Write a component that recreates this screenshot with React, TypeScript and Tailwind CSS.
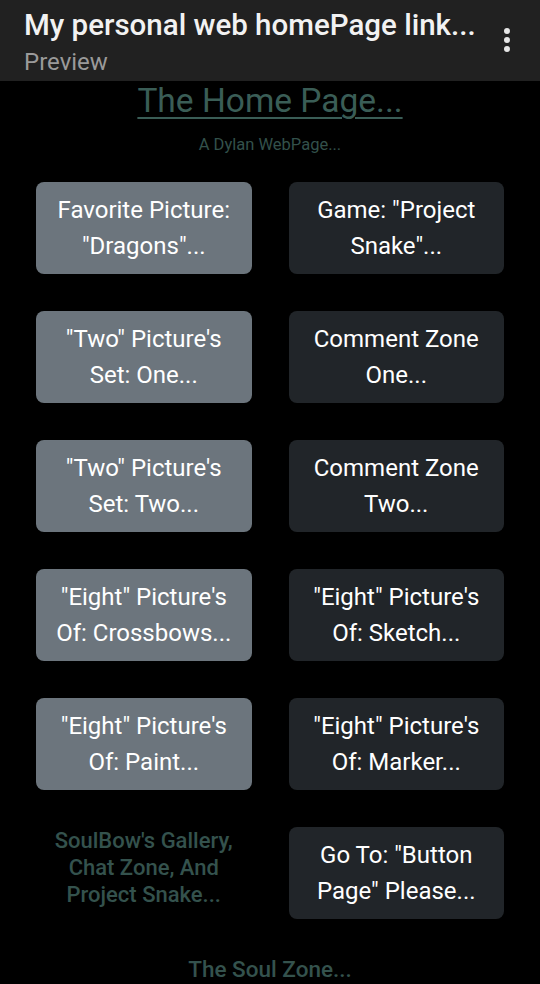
import React from 'react';

const buttons = [
  ['Favorite Picture: "Dragons"...', 'Game: "Project Snake"...'],
  ['"Two" Picture\'s Set: One...', 'Comment Zone One...'],
  ['"Two" Picture\'s Set: Two...', 'Comment Zone Two...'],
  ['"Eight" Picture\'s Of: Crossbows...', '"Eight" Picture\'s Of: Sketch...'],
  ['"Eight" Picture\'s Of: Paint...', '"Eight" Picture\'s Of: Marker...'],
];

function PageButton({ label, light }: { label: string; light?: boolean }) {
  return (
    <button
      className={
        'h-[92px] rounded-[8px] px-4 text-[24px] leading-[36px] text-white ' +
        (light ? 'bg-[#6c757d]' : 'bg-[#212529]')
      }
    >
      {label}
    </button>
  );
}

export default function App() {
  return (
    <div className="min-h-[984px] w-[540px] bg-black font-['Roboto',sans-serif]">
      <div className="flex h-[81px] items-start justify-between bg-[#212121] pl-6 pr-[30px]">
        <div className="pt-[7px]">
          <div className="text-[29.5px] font-medium leading-[36px] text-[#f2f2f2]">My personal web homePage link...</div>
          <div className="mt-[2px] text-[24px] leading-[34px] text-[#9a9a9a]">Preview</div>
        </div>
        <div className="mt-[28px] flex flex-col gap-[3px]">
          <span className="h-[6px] w-[6px] rounded-full bg-[#e6e6e6]" />
          <span className="h-[6px] w-[6px] rounded-full bg-[#e6e6e6]" />
          <span className="h-[6px] w-[6px] rounded-full bg-[#e6e6e6]" />
        </div>
      </div>

      <div className="flex flex-col items-center">
        <h1 className="mt-[0px] text-[33.5px] leading-[40px] text-[#3a5d56] underline decoration-[2px] underline-offset-[5px]">
          The Home Page...
        </h1>
        <p className="mt-[13px] text-[16.5px] leading-[22px] text-[#33514b]">A Dylan WebPage...</p>
      </div>

      <div className="mt-[26px] grid grid-cols-2 gap-[37px] px-[36px]">
        {buttons.map(([l, r]) => (
          <React.Fragment key={l}>
            <PageButton label={l} light />
            <PageButton label={r} />
          </React.Fragment>
        ))}
        <div className="flex items-center justify-center px-3 pb-[12px] text-center text-[22px] font-medium leading-[27px] text-[#34524d]">
          SoulBow's Gallery, Chat Zone, And Project Snake...
        </div>
        <PageButton label={'Go To: "Button Page" Please...'} />
      </div>

      <div className="mt-[35px] text-center text-[22.5px] font-medium leading-[28px] text-[#34524d]">The Soul Zone...</div>
    </div>
  );
}
